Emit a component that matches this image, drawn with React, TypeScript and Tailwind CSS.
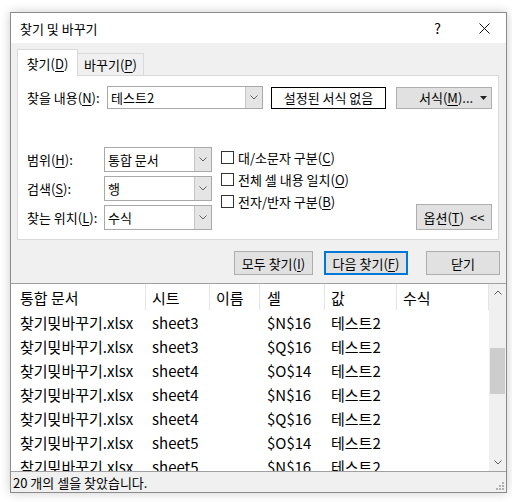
import React from "react";

const font = "font-['Noto_Sans_CJK_KR','Noto_Sans',sans-serif]";

function Chevron({ up = false }: { up?: boolean }) {
  return (
    <svg width="8" height="5" viewBox="0 0 8 5" className="block">
      <path
        d={up ? "M0.5 4.5 L4 1 L7.5 4.5" : "M0.5 0.5 L4 4 L7.5 0.5"}
        fill="none"
        stroke="#606060"
        strokeWidth="1"
      />
    </svg>
  );
}

function Key({ k }: { k: string }) {
  return (
    <>
      (<span className="underline underline-offset-2">{k}</span>)
    </>
  );
}

function Combo({ value, w, h }: { value: string; w: string; h: string }) {
  return (
    <div className={`flex ${w} ${h} border border-[#a9a9a9] bg-white`}>
      <div className="flex flex-1 items-center pl-[3px] text-[13px] leading-none">{value}</div>
      <div className="flex w-[17px] items-center justify-center border-l border-[#c5c5c5] bg-[#e5e5e5]">
        <Chevron />
      </div>
    </div>
  );
}

function Check({ children }: { children: React.ReactNode }) {
  return (
    <div className="flex h-[22px] items-center">
      <div className="h-[13px] w-[13px] border border-[#333] bg-white" />
      <span className="ml-[4px] text-[13px] leading-none">{children}</span>
    </div>
  );
}

const rows = [
  ["sheet3", "$N$16"],
  ["sheet3", "$Q$16"],
  ["sheet4", "$O$14"],
  ["sheet4", "$N$16"],
  ["sheet4", "$Q$16"],
  ["sheet5", "$O$14"],
  ["sheet5", "$N$16"],
];

const cols = [
  { w: "w-[135px]", pl: "pl-[9px]", label: "통합 문서" },
  { w: "w-[64px]", pl: "pl-[6px]", label: "시트" },
  { w: "w-[50px]", pl: "pl-[6px]", label: "이름" },
  { w: "w-[65px]", pl: "pl-[7px]", label: "셀" },
  { w: "w-[72px]", pl: "pl-[6px]", label: "값" },
  { w: "w-[92px]", pl: "pl-[6px]", label: "수식" },
];

export default function App() {
  return (
    <div className={`h-[502px] w-[512px] overflow-hidden bg-white pl-[10px] pt-[12px] text-black ${font}`}>
      <div className="flex h-[481px] w-[497px] flex-col border border-[#8a8a8a] bg-[#f0f0f0] shadow-[0_0_10px_rgba(0,0,0,0.2)]">
        {/* title bar */}
        <div className="flex h-[30px] items-center bg-white pl-[9px]">
          <span className="text-[13px] leading-none">찾기 및 바꾸기</span>
          <span className="ml-auto text-[14px] leading-none">?</span>
          <svg width="11" height="11" viewBox="0 0 11 11" className="ml-[38px] mr-[16px]">
            <path d="M0.5 0.5 L10.5 10.5 M10.5 0.5 L0.5 10.5" stroke="#111" strokeWidth="1" />
          </svg>
        </div>

        {/* body */}
        <div className="flex h-[240px] flex-col pl-[6px] pt-[6px] text-[13px]">
          <div className="flex h-[26px] items-end">
            <div className="relative z-10 -mb-px flex h-[27px] w-[61px] items-center justify-center border border-b-0 border-[#d9d9d9] bg-white leading-none">
              찾기<Key k="D" />
            </div>
            <div className="flex h-[22px] w-[66px] items-center justify-center border border-b-0 border-l-0 border-[#d9d9d9] bg-[#f0f0f0] leading-none">
              바꾸기<Key k="P" />
            </div>
          </div>

          <div className="flex h-[165px] w-[482px] flex-col border border-[#d9d9d9] bg-white pl-[9px] pt-[10px]">
            <div className="flex h-[23px] items-center">
              <div className="w-[80px] leading-none">
                찾을 내용<Key k="N" />:
              </div>
              <Combo value="테스트2" w="w-[156px]" h="h-[23px]" />
              <div className="ml-[8px] flex h-[22px] w-[115px] items-center justify-center border border-black leading-none">
                설정된 서식 없음
              </div>
              <div className="ml-[10px] flex h-[22px] w-[96px] items-center border border-[#adadad] bg-[#e1e1e1] leading-none">
                <span className="ml-[22px]">
                  서식<Key k="M" />...
                </span>
                <svg width="7" height="4" viewBox="0 0 7 4" className="ml-auto mr-[4px]">
                  <path d="M0 0 H7 L3.5 4 Z" fill="#222" />
                </svg>
              </div>
            </div>

            <div className="mt-[37px] flex">
              <div className="flex flex-col gap-[4px] pt-[1px]">
                {[
                  ["범위", "H", "통합 문서"],
                  ["검색", "S", "행"],
                  ["찾는 위치", "L", "수식"],
                ].map(([l, k, v]) => (
                  <div key={k} className="flex h-[25px] items-center">
                    <div className="w-[77px] leading-none">
                      {l}
                      <Key k={k} />:
                    </div>
                    <Combo value={v} w="w-[108px]" h="h-[25px]" />
                  </div>
                ))}
              </div>
              <div className="ml-[9px] flex flex-col">
                <Check>
                  대/소문자 구분<Key k="C" />
                </Check>
                <Check>
                  전체 셀 내용 일치<Key k="O" />
                </Check>
                <Check>
                  전자/반자 구분<Key k="B" />
                </Check>
              </div>
              <div className="ml-auto mr-[6px] flex h-[26px] w-[76px] items-center justify-center self-end border border-[#adadad] bg-[#e1e1e1] leading-none">
                옵션<Key k="T" />
                <span className="ml-[6px]">&lt;&lt;</span>
              </div>
            </div>
          </div>

          <div className="mt-[11px] flex leading-none">
            <div className="ml-[217px] flex h-[24px] w-[79px] items-center justify-center border border-[#adadad] bg-[#e1e1e1]">
              모두 찾기<Key k="I" />
            </div>
            <div className="ml-[11px] flex h-[24px] w-[84px] items-center justify-center border-2 border-[#0078d7] bg-[#e1e1e1]">
              다음 찾기<Key k="F" />
            </div>
            <div className="ml-[18px] flex h-[24px] w-[74px] items-center justify-center border border-[#adadad] bg-[#e1e1e1]">
              닫기
            </div>
          </div>
        </div>

        {/* results list */}
        <div className="flex h-[189px] border-y border-[#a0a0a0] bg-white">
          <div className="w-[478px] overflow-hidden">
            <div className="flex h-[26px]">
              {cols.map((c) => (
                <div
                  key={c.label}
                  className={`${c.w} ${c.pl} flex items-center border-r border-[#e5e5e5] text-[15px] leading-none`}
                >
                  {c.label}
                </div>
              ))}
            </div>
            {rows.map(([sheet, cell], i) => (
              <div key={i} className="flex h-[24px] items-center text-[15px] leading-none">
                <div className={`${cols[0].w} ${cols[0].pl}`}>찾기밎바꾸기.xlsx</div>
                <div className={`${cols[1].w} ${cols[1].pl}`}>{sheet}</div>
                <div className={`${cols[2].w} ${cols[2].pl}`} />
                <div className={`${cols[3].w} ${cols[3].pl}`}>{cell}</div>
                <div className={`${cols[4].w} ${cols[4].pl}`}>테스트2</div>
              </div>
            ))}
          </div>
          <div className="flex w-[17px] flex-col bg-[#f0f0f0]">
            <div className="flex h-[17px] items-center justify-center">
              <Chevron up />
            </div>
            <div className="ml-px mt-[47px] h-[46px] w-[15px] bg-[#cdcdcd]" />
            <div className="mt-auto flex h-[17px] items-center justify-center">
              <Chevron />
            </div>
          </div>
        </div>

        {/* status bar */}
        <div className="flex h-[20px] items-center pl-[2px]">
          <span className="text-[13px] leading-none">20 개의 셀을 찾았습니다.</span>
          <svg width="8" height="8" viewBox="0 0 8 8" className="ml-auto mr-[2px] mt-[8px]">
            <g fill="#b0b0b0">
              <rect x="6" y="0" width="2" height="2" />
              <rect x="3" y="3" width="2" height="2" />
              <rect x="6" y="3" width="2" height="2" />
              <rect x="0" y="6" width="2" height="2" />
              <rect x="3" y="6" width="2" height="2" />
              <rect x="6" y="6" width="2" height="2" />
            </g>
          </svg>
        </div>
      </div>
    </div>
  );
}
